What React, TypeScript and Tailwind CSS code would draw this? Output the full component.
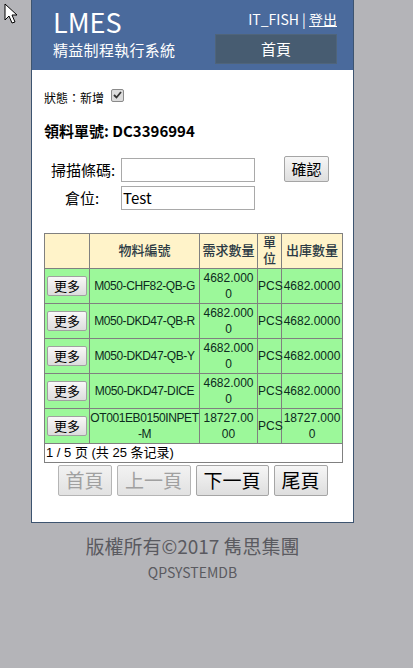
import React from "react";

const rows = [
  { code: "M050-CHF82-QB-G", need: "4682.0000", unit: "PCS", out: "4682.0000" },
  { code: "M050-DKD47-QB-R", need: "4682.0000", unit: "PCS", out: "4682.0000" },
  { code: "M050-DKD47-QB-Y", need: "4682.0000", unit: "PCS", out: "4682.0000" },
  { code: "M050-DKD47-DICE", need: "4682.0000", unit: "PCS", out: "4682.0000" },
  { code: "OT001EB0150INPET-M", need: "18727.0000", unit: "PCS", out: "18727.0000" },
];

const cjk = "font-['Noto_Sans_CJK_TC',sans-serif]";
const grid = "font-['Liberation_Sans','Noto_Sans_CJK_TC',sans-serif]";

// let long codes wrap before the last dash, like the old grid did
const Code = ({ text }: { text: string }) => {
  const i = text.lastIndexOf("-");
  if (i < 0) return <>{text}</>;
  return (
    <>
      {text.slice(0, i)}
      <wbr />
      {text.slice(i)}
    </>
  );
};

const App = () => {
  return (
    <div className={`relative min-h-[668px] w-[413px] bg-[#b4b4b8] ${cjk}`}>
      {/* mouse pointer */}
      <svg className="absolute left-[4px] top-[3px]" width="16" height="22" viewBox="0 0 16 22">
        <path d="M1 1 L1 17 L5 13 L8 20 L11 19 L8 12 L13 12 Z" fill="#fff" stroke="#000" strokeWidth="1" />
      </svg>

      <div className="ml-[31px] w-[323px] border-x border-b border-[#3d5470] bg-white">
        <div className="flex h-[70px] justify-between bg-[#4a6a9c] pl-[21px] pr-[16px] text-white">
          <div className="pt-[5px]">
            <div className="text-[27px] leading-[34px]">LMES</div>
            <div className="mt-[1px] text-[15px] leading-[20px] tracking-[0.3px]">精益制程執行系統</div>
          </div>
          <div className="flex flex-col items-end pt-[9px]">
            <div className="text-[14px] leading-[20px]">
              IT_FISH | <span className="underline">登出</span>
            </div>
            <div className="mt-[5px] flex h-[30px] w-[122px] items-center justify-center border border-[#4f647a] bg-[#475c71] text-[15px]">
              首頁
            </div>
          </div>
        </div>

        <div className="px-[12px] pb-[26px]">
          <div className="mt-[19px] flex items-center text-[12px] leading-[18px] text-black">
            <span>狀態：新增</span>
            <span className="ml-[7px] mt-[-6px] flex h-[13px] w-[13px] items-center justify-center rounded-[2px] border border-[#8a8a8a] bg-[#dcdcdc]">
              <svg width="9" height="8" viewBox="0 0 9 8">
                <path d="M1 4 L3.5 6.5 L8 1" fill="none" stroke="#333" strokeWidth="1.8" />
              </svg>
            </span>
          </div>

          <div className="mt-[14px] text-[15px] font-bold leading-[20px] text-black">領料單號: DC3396994</div>

          <div className="mt-[17px] flex items-start">
            <div className="w-[77px] whitespace-nowrap pl-[7px] pt-[2px] text-[15px] leading-[20px] text-black">掃描條碼:</div>
            <div className="h-[24px] w-[134px] border border-[#a9a9a9] bg-white" />
            <div className="ml-[29px] mt-[-2px] flex h-[26px] w-[45px] items-center justify-center rounded-[2px] border border-[#a5a5a5] bg-gradient-to-b from-[#f6f6f6] to-[#dedede] text-[15px] text-black">
              確認
            </div>
          </div>
          <div className="mt-[4px] flex items-start">
            <div className="w-[77px] whitespace-nowrap pl-[21px] pt-[2px] text-[15px] leading-[20px] text-black">倉位:</div>
            <div className="flex h-[24px] w-[134px] items-center border border-[#a9a9a9] bg-white pl-[1px] text-[15px] text-black">
              Test
            </div>
          </div>

          <table className={`mt-[23px] w-[298px] table-fixed border-collapse border border-[#808080] text-[12px] leading-[16px] ${grid}`}>
            <colgroup>
              <col className="w-[45px]" />
              <col className="w-[110px]" />
              <col className="w-[58px]" />
              <col className="w-[24px]" />
              <col className="w-[61px]" />
            </colgroup>
            <thead>
              <tr className="h-[35px] bg-[#fff3c9] text-[13px] text-[#2b3a44]">
                <th className="border border-[#808080] font-medium" />
                <th className="border border-[#808080] font-medium">物料編號</th>
                <th className="border border-[#808080] px-0 font-medium">需求數量</th>
                <th className="border border-[#808080] px-0 font-medium">單位</th>
                <th className="border border-[#808080] px-0 font-medium">出庫數量</th>
              </tr>
            </thead>
            <tbody>
              {rows.map((r) => (
                <tr key={r.code} className="h-[35px] bg-[#9cf89a] text-center text-[#0d2a20]">
                  <td className="border border-[#808080] px-[1px]">
                    <div className={`mx-auto flex h-[20px] w-[40px] items-center justify-center rounded-[2px] border border-[#a0a0a0] bg-gradient-to-b from-[#f8f8f8] to-[#dcdcdc] text-[13px] text-black ${cjk}`}>
                      更多
                    </div>
                  </td>
                  <td className="break-words border border-[#808080] px-0 tracking-[-0.4px]">
                    <Code text={r.code} />
                  </td>
                  <td className="break-all border border-[#808080] px-[1px]">{r.need}</td>
                  <td className="border border-[#808080] px-0">{r.unit}</td>
                  <td className="break-all border border-[#808080] px-0">{r.out}</td>
                </tr>
              ))}
              <tr className="h-[19px] bg-white">
                <td colSpan={5} className="pl-[1px] text-left font-['Liberation_Sans','Noto_Sans_CJK_SC',sans-serif] text-[13px] text-black">
                  1 / 5 页 (共 25 条记录)
                </td>
              </tr>
            </tbody>
          </table>

          <div className="mt-[2px] flex justify-center gap-[5px] text-[19px]">
            <div className="flex h-[31px] w-[54px] items-center justify-center rounded-[2px] border border-[#b5b5b5] bg-gradient-to-b from-[#f2f2f2] to-[#e2e2e2] text-[#a0a0a0]">首頁</div>
            <div className="flex h-[31px] w-[74px] items-center justify-center rounded-[2px] border border-[#b5b5b5] bg-gradient-to-b from-[#f2f2f2] to-[#e2e2e2] text-[#a0a0a0]">上一頁</div>
            <div className="flex h-[31px] w-[73px] items-center justify-center rounded-[2px] border border-[#a5a5a5] bg-gradient-to-b from-[#f6f6f6] to-[#dedede] text-black">下一頁</div>
            <div className="flex h-[31px] w-[54px] items-center justify-center rounded-[2px] border border-[#a5a5a5] bg-gradient-to-b from-[#f6f6f6] to-[#dedede] text-black">尾頁</div>
          </div>
        </div>
      </div>

      <div className="ml-[31px] w-[323px] pt-[11px] text-center text-[#5a5a60]">
        <div className="text-[19px] leading-[24px]">版權所有©2017 雋思集團</div>
        <div className="mt-[5px] text-[14px] leading-[18px]">QPSYSTEMDB</div>
      </div>
    </div>
  );
};

export default App;
